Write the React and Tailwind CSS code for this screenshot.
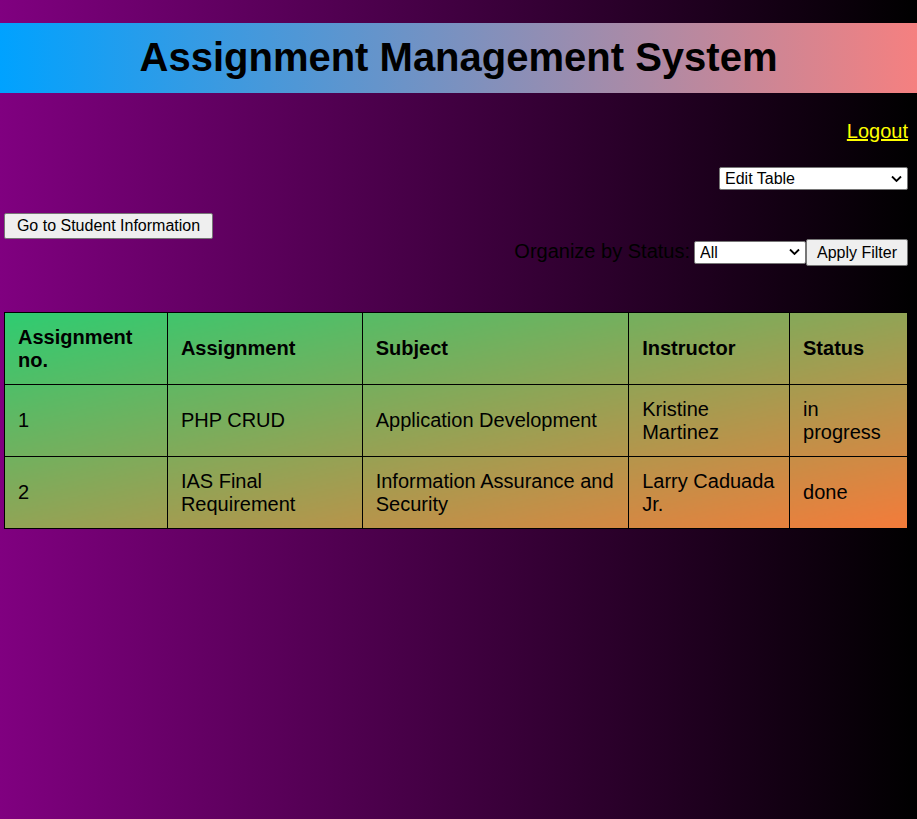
import React from 'react';

const columns = [
  { key: 'no', label: 'Assignment no.', width: 163 },
  { key: 'assignment', label: 'Assignment', width: 195 },
  { key: 'subject', label: 'Subject', width: 267 },
  { key: 'instructor', label: 'Instructor', width: 161 },
  { key: 'status', label: 'Status', width: 118 },
];

const rows = [
  { no: '1', assignment: 'PHP CRUD', subject: 'Application Development', instructor: 'Kristine Martinez', status: 'in progress' },
  { no: '2', assignment: 'IAS Final Requirement', subject: 'Information Assurance and Security', instructor: 'Larry Caduada Jr.', status: 'done' },
];

function Select({ value, options, className }) {
  return (
    <div className={`relative ${className}`}>
      <select
        defaultValue={value}
        className="appearance-none w-full h-full bg-white border border-[#767676] rounded-[2px] pl-[5px] pr-[20px] text-[16px] leading-[19px] text-black"
      >
        {options.map((o) => (
          <option key={o}>{o}</option>
        ))}
      </select>
      <svg className="absolute right-[6px] top-1/2 -translate-y-1/2 pointer-events-none" width="11" height="7" viewBox="0 0 11 7" fill="none">
        <path d="M1 1l4.5 4.5L10 1" stroke="#000" strokeWidth="1.8" />
      </svg>
    </div>
  );
}

export default function App() {
  return (
    <div className="min-h-screen bg-[linear-gradient(to_right,#800080,#000)] pt-[23px] font-['Liberation_Sans',Arial,sans-serif] text-black">
      <header className="h-[70px] flex items-center justify-center bg-[linear-gradient(to_right,#00a2ff,#f58080)]">
        <h1 className="text-[40px] font-bold leading-[46px] mt-[-2px]">Assignment Management System</h1>
      </header>

      <div className="flex justify-end pr-[9px] mt-[27px]">
        <a href="#" className="text-[20px] leading-[23px] text-[#ffff00] underline">Logout</a>
      </div>

      <div className="flex justify-end pr-[9px] mt-[24px]">
        <Select value="Edit Table" options={['Edit Table', 'Add Row', 'Delete Row']} className="w-[189px] h-[23px]" />
      </div>

      <div className="pl-[4px] mt-[23px]">
        <button className="h-[26px] w-[209px] bg-[#efefef] border border-[#767676] rounded-[2px] text-[16px] leading-[18px]">
          Go to Student Information
        </button>
      </div>

      <div className="flex justify-end items-center pr-[9px]">
        <span className="text-[20px] leading-[23px] mr-[4px] mt-[-2px]">Organize by Status:</span>
        <Select value="All" options={['All', 'in progress', 'done']} className="w-[112px] h-[23px] mt-[-1px]" />
        <button className="h-[27px] w-[102px] bg-[#efefef] border border-[#767676] rounded-[2px] text-[16px] leading-[18px]">
          Apply Filter
        </button>
      </div>

      <div className="px-[4px] mt-[46px]">
        <table className="w-[904px] border-collapse bg-[linear-gradient(to_bottom_right,#2ecc71,#f47b3a)] text-[20px] leading-[23px]">
          <colgroup>
            {columns.map((c) => (
              <col key={c.key} style={{ width: c.width }} />
            ))}
          </colgroup>
          <thead>
            <tr className="h-[72px]">
              {columns.map((c) => (
                <th key={c.key} className="border border-black px-[13px] py-[12px] text-left font-bold align-middle">
                  {c.label}
                </th>
              ))}
            </tr>
          </thead>
          <tbody>
            {rows.map((r) => (
              <tr key={r.no} className="h-[72px]">
                {columns.map((c) => (
                  <td key={c.key} className="border border-black px-[13px] py-[12px] align-middle">
                    {r[c.key]}
                  </td>
                ))}
              </tr>
            ))}
          </tbody>
        </table>
      </div>
    </div>
  );
}
